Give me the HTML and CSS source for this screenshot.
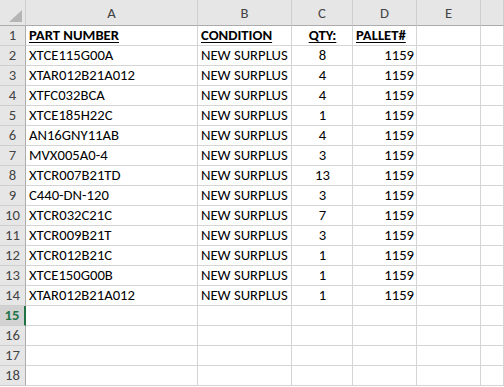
FILE: index.html
```html
<!DOCTYPE html>
<html lang="en">
<head>
  <meta charset="UTF-8" />
  <title>Pallet 1159</title>
  <link rel="stylesheet" href="styles.css">
</head>
<body>
  <table class="sheet">
    <colgroup>
      <col class="w-head">
      <col class="w-a">
      <col class="w-b">
      <col class="w-c">
      <col class="w-d">
      <col class="w-e">
      <col>
    </colgroup>
    <thead>
      <tr>
        <th class="corner"><span class="tri"></span></th>
        <th>A</th>
        <th>B</th>
        <th>C</th>
        <th>D</th>
        <th>E</th>
        <th></th>
      </tr>
    </thead>
    <tbody>
      <tr>
        <th>1</th>
        <td class="title">PART NUMBER</td>
        <td class="title">CONDITION</td>
        <td class="title mid">QTY:</td>
        <td class="title">PALLET#</td>
        <td></td><td></td>
      </tr>
      <tr><th>2</th><td>XTCE115G00A</td><td>NEW SURPLUS</td><td class="mid">8</td><td class="num">1159</td><td></td><td></td></tr>
      <tr><th>3</th><td>XTAR012B21A012</td><td>NEW SURPLUS</td><td class="mid">4</td><td class="num">1159</td><td></td><td></td></tr>
      <tr><th>4</th><td>XTFC032BCA</td><td>NEW SURPLUS</td><td class="mid">4</td><td class="num">1159</td><td></td><td></td></tr>
      <tr><th>5</th><td>XTCE185H22C</td><td>NEW SURPLUS</td><td class="mid">1</td><td class="num">1159</td><td></td><td></td></tr>
      <tr><th>6</th><td>AN16GNY11AB</td><td>NEW SURPLUS</td><td class="mid">4</td><td class="num">1159</td><td></td><td></td></tr>
      <tr><th>7</th><td>MVX005A0-4</td><td>NEW SURPLUS</td><td class="mid">3</td><td class="num">1159</td><td></td><td></td></tr>
      <tr><th>8</th><td>XTCR007B21TD</td><td>NEW SURPLUS</td><td class="mid">13</td><td class="num">1159</td><td></td><td></td></tr>
      <tr><th>9</th><td>C440-DN-120</td><td>NEW SURPLUS</td><td class="mid">3</td><td class="num">1159</td><td></td><td></td></tr>
      <tr><th>10</th><td>XTCR032C21C</td><td>NEW SURPLUS</td><td class="mid">7</td><td class="num">1159</td><td></td><td></td></tr>
      <tr><th>11</th><td>XTCR009B21T</td><td>NEW SURPLUS</td><td class="mid">3</td><td class="num">1159</td><td></td><td></td></tr>
      <tr><th>12</th><td>XTCR012B21C</td><td>NEW SURPLUS</td><td class="mid">1</td><td class="num">1159</td><td></td><td></td></tr>
      <tr><th>13</th><td>XTCE150G00B</td><td>NEW SURPLUS</td><td class="mid">1</td><td class="num">1159</td><td></td><td></td></tr>
      <tr><th>14</th><td>XTAR012B21A012</td><td>NEW SURPLUS</td><td class="mid">1</td><td class="num">1159</td><td></td><td></td></tr>
      <tr class="picked"><th>15</th><td></td><td></td><td></td><td></td><td></td><td></td></tr>
      <tr><th>16</th><td></td><td></td><td></td><td></td><td></td><td></td></tr>
      <tr><th>17</th><td></td><td></td><td></td><td></td><td></td><td></td></tr>
      <tr><th>18</th><td></td><td></td><td></td><td></td><td></td><td></td></tr>
    </tbody>
  </table>
</body>
</html>
```

FILE: styles.css
```css
/* Base */
* {
  margin: 0;
  padding: 0;
  box-sizing: border-box;
}

body {
  background: #fff;
  font-family: Carlito, 'Liberation Sans Narrow', sans-serif;
  font-size: 14.67px;
  color: #000;
  overflow: hidden;
}

/* Grid */
.sheet {
  border-collapse: separate;
  border-spacing: 0;
  table-layout: fixed;
  width: 100%;
}

.w-head { width: 26px; }
.w-a { width: 172px; }
.w-b { width: 94px; }
.w-c { width: 61px; }
.w-d { width: 64px; }
.w-e { width: 64px; }

td {
  height: 20px;
  padding: 0 2px 0 3px;
  border-right: 1px solid #d4d4d4;
  border-bottom: 1px solid #d4d4d4;
  white-space: nowrap;
  overflow: hidden;
  vertical-align: bottom;
  line-height: 19px;
}

td.title {
  font-weight: bold;
  text-decoration: underline;
  text-underline-offset: 2px;
}

td.mid { text-align: center; }
td.num { text-align: right; padding-right: 2px; }

/* Headers */
th {
  background: #e6e6e6;
  color: #444;
  font-weight: normal;
  border-right: 1px solid #ababab;
  border-bottom: 1px solid #ababab;
  text-align: center;
  vertical-align: middle;
  line-height: 19px;
}

thead th {
  height: 26px;
  border-right-color: #cfcfcf;
  padding-top: 2px;
}

tbody th {
  height: 20px;
  border-bottom-color: #cfcfcf;
}

.corner {
  position: relative;
}

.tri {
  position: absolute;
  right: 3px;
  bottom: 3px;
  width: 0;
  height: 0;
  border-left: 13px solid transparent;
  border-bottom: 12px solid #b5b5b5;
}

/* Selected row */
.picked th {
  background: #d2d2d2;
  color: #217346;
  font-weight: bold;
  border-right: 2px solid #217346;
}
```
